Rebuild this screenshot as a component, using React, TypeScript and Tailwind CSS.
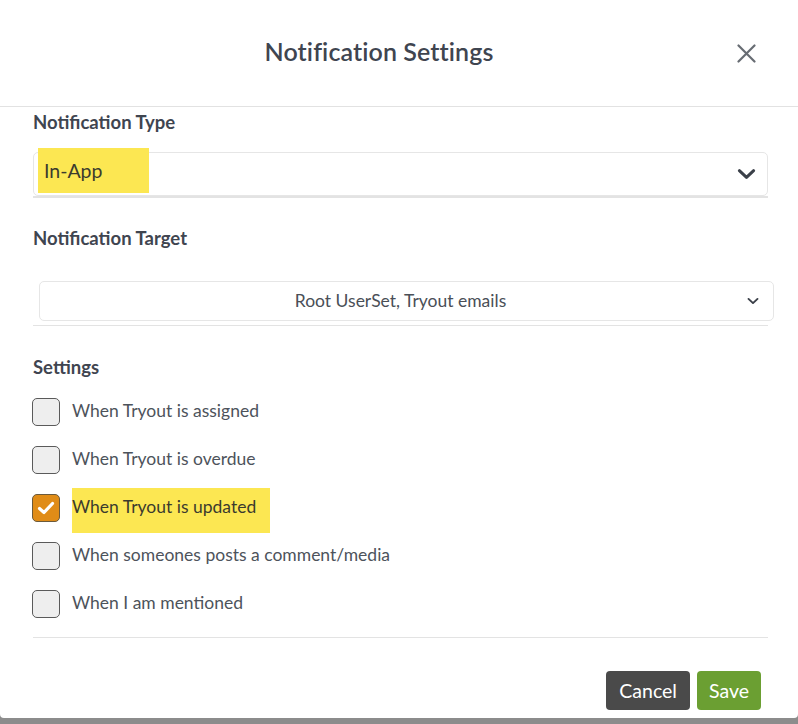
import React from "react";

function Chevron({ className }: { className?: string }) {
  return (
    <svg className={className} viewBox="0 0 20 12" fill="none">
      <path d="M2.5 2.5 L10 9.5 L17.5 2.5" stroke="currentColor" strokeWidth="3.2" strokeLinecap="round" strokeLinejoin="round" />
    </svg>
  );
}

const items = [
  { label: "When Tryout is assigned", checked: false },
  { label: "When Tryout is overdue", checked: false },
  { label: "When Tryout is updated", checked: true },
  { label: "When someones posts a comment/media", checked: false },
  { label: "When I am mentioned", checked: false },
];

export default function App() {
  return (
    <div className="w-[798px] h-[724px] bg-[#8c8c8c] overflow-hidden font-['Lato',sans-serif]">
      <div className="bg-white h-[718px] rounded-b-[4px]">
        {/* Header */}
        <div className="h-[107px] flex items-center pl-[32px] border-b border-[#e2e2e2]">
          <div className="flex-1 text-center text-[25px] font-semibold text-[#3f4550] tracking-[0.1px] -mt-[2px]">
            Notification Settings
          </div>
          <button className="w-[40px] mr-[32px] h-[40px] flex items-center justify-center text-[#676c73]">
            <svg width="19" height="19" viewBox="0 0 19 19" fill="none">
              <path d="M1.5 1.5 L17.5 17.5 M17.5 1.5 L1.5 17.5" stroke="currentColor" strokeWidth="2.2" strokeLinecap="round" />
            </svg>
          </button>
        </div>

        <div className="pl-[33px] pr-[30px]">
          {/* Notification Type */}
          <div className="mt-[4px] text-[18.5px] leading-[22px] font-bold text-[#3f4550]">Notification Type</div>
          <div className="mt-[19px] border-b-2 border-[#e3e3e3]">
            <div className="relative h-[44px] border border-[#e6e6e6] rounded-[5px] flex items-center justify-end pr-[11px] text-[#3b4049]">
              <span className="absolute left-[4px] -top-[5px] w-[111px] h-[45px] bg-[#fce752] flex items-center pl-[6px] text-[19.5px] text-[#3b3b2e]">
                In-App
              </span>
              <Chevron className="w-[19px] h-[12px]" />
            </div>
          </div>

          {/* Notification Target */}
          <div className="mt-[29px] text-[18.5px] leading-[22px] font-bold text-[#3f4550]">Notification Target</div>
          <div className="mt-[32px] pb-[4px] border-b border-[#e3e3e3]">
            <div className="ml-[6px] -mr-[6px] h-[40px] border border-[#e6e6e6] rounded-[5px] flex items-center pr-[14px] text-[#4a4f57]">
              <div className="flex-1 text-center text-[17.5px] pl-[14px]">Root UserSet, Tryout emails</div>
              <Chevron className="w-[12px] h-[8px] text-[#3b4049]" />
            </div>
          </div>

          {/* Settings */}
          <div className="mt-[30px] text-[18.5px] leading-[22px] font-bold text-[#3f4550]">Settings</div>
          <div className="mt-[20px] flex flex-col gap-[21px] pb-[20px] border-b border-[#e3e3e3]">
            {items.map((it) => (
              <div key={it.label} className="flex items-center h-[27px]">
                <div
                  className={
                    it.checked
                      ? "w-[28px] h-[28px] -ml-[1px] rounded-[5px] border border-[#6b5a3c] bg-[#e08c17] flex items-center justify-center"
                      : "w-[28px] h-[28px] -ml-[1px] rounded-[5px] border border-[#5a5a5a] bg-[#eeeeee]"
                  }
                >
                  {it.checked && (
                    <svg width="18" height="14" viewBox="0 0 18 14" fill="none">
                      <path d="M2.5 7.5 L7 11.5 L15.5 2.5" stroke="white" strokeWidth="3.2" strokeLinecap="round" strokeLinejoin="round" />
                    </svg>
                  )}
                </div>
                {it.checked ? (
                  <span className="ml-[12px] h-[45px] mt-[5px] pr-[14px] bg-[#fce752] flex items-center pb-[5px] text-[17.5px] text-[#3b3b2e]">
                    {it.label}
                  </span>
                ) : (
                  <span className="ml-[12px] text-[17.5px] text-[#4d535b]">{it.label}</span>
                )}
              </div>
            ))}
          </div>

          {/* Footer */}
          <div className="mt-[33px] flex justify-end gap-[7px] mr-[7px]">
            <button className="h-[39px] px-[13px] rounded-[4px] bg-[#4a4a4a] text-white text-[19.5px]">Cancel</button>
            <button className="h-[39px] px-[12px] rounded-[4px] bg-[#6b9f32] text-white text-[19.5px]">Save</button>
          </div>
        </div>
      </div>
    </div>
  );
}
